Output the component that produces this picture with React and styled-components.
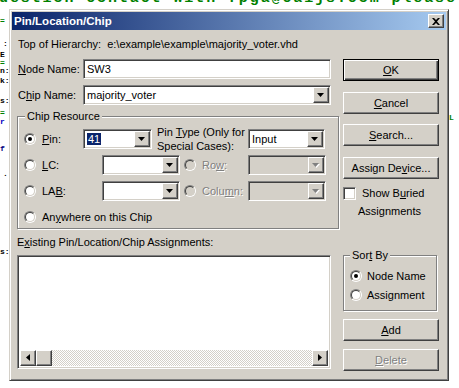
import React from 'react'
import styled, { createGlobalStyle } from 'styled-components'

const FACE = '#d4d0c8'
const SHADOW = '#808080'
const DARK = '#404040'
const UI_FONT = `"Liberation Sans", Arial, sans-serif`

const GlobalStyle = createGlobalStyle`
  html, body {
    margin: 0;
    padding: 0;
    background: #fff;
  }
  body {
    font-family: ${UI_FONT};
  }
`

const Desktop = styled.div`
  position: relative;
  width: 459px;
  height: 388px;
  overflow: hidden;
  background: #fff;
`

// editor text peeking out behind the dialog
const CodeTop = styled.div`
  position: absolute;
  left: -1px;
  top: -10px;
  font: bold 15px 'Liberation Mono', monospace;
  letter-spacing: 1.9px;
  color: #008000;
  white-space: pre;
`
const Frag = styled.div`
  position: absolute;
  left: ${(p) => p.$x || 0}px;
  top: ${(p) => p.$y}px;
  font: bold 8px 'Liberation Mono', monospace;
  line-height: 7px;
  color: ${(p) => p.$c};
  white-space: pre;
`

const Window = styled.div`
  position: absolute;
  left: 9px;
  top: 9px;
  width: 440px;
  height: 372px;
  box-sizing: border-box;
  padding: 2px;
  background: ${FACE};
  border: 1px solid;
  border-color: ${FACE} ${DARK} ${DARK} ${FACE};
  box-shadow: inset 1px 1px #fff, inset -1px -1px ${SHADOW};
  font-family: ${UI_FONT};
  font-size: 11px;
  color: #000;
`
const TitleBar = styled.div`
  display: flex;
  align-items: center;
  justify-content: space-between;
  height: 18px;
  padding: 0 2px;
  background: linear-gradient(to right, #0a246a, #a6caf0);
`
const Title = styled.span`
  font-weight: bold;
  font-size: 11.5px;
  color: #fff;
`
const CloseBtn = styled.div`
  display: flex;
  align-items: center;
  justify-content: center;
  width: 16px;
  height: 14px;
  box-sizing: border-box;
  background: ${FACE};
  border: 1px solid;
  border-color: #fff ${DARK} ${DARK} #fff;
  box-shadow: inset -1px -1px ${SHADOW};
`

const Body = styled.div`
  display: flex;
  gap: 4px;
  padding: 7px 0 0 5px;
`
const LeftCol = styled.div`
  display: flex;
  flex-direction: column;
  width: 322px;
`
const RightCol = styled.div`
  display: flex;
  flex-direction: column;
  width: 96px;
`

const Hier = styled.div`
  height: 14px;
  line-height: 14px;
  white-space: nowrap;
  padding-left: 1px;
`
const Path = styled.span`
  margin-left: 6px;
`

const Row = styled.div`
  display: flex;
  align-items: center;
  height: ${(p) => p.$h || 20}px;
  margin-top: ${(p) => p.$mt || 0}px;
`
const Label = styled.span`
  width: ${(p) => p.$w}px;
  flex: none;
  white-space: nowrap;
  padding-left: ${(p) => p.$pl || 0}px;
  box-sizing: border-box;
  color: ${(p) => (p.$disabled ? SHADOW : '#000')};
  text-shadow: ${(p) => (p.$disabled ? '1px 1px #fff' : 'none')};
`
const Acc = styled.span`
  text-decoration: underline;
  text-underline-offset: 1px;
`

const Sunken = styled.div`
  box-sizing: border-box;
  border: 1px solid;
  border-color: ${SHADOW} #fff #fff ${SHADOW};
  box-shadow: inset 1px 1px ${DARK}, inset -1px -1px ${FACE};
`
const TextField = styled(Sunken)`
  display: flex;
  align-items: center;
  width: ${(p) => p.$w}px;
  height: 20px;
  padding: 0 3px;
  background: #fff;
`
const Combo = styled(Sunken)`
  display: flex;
  align-items: center;
  flex: none;
  width: ${(p) => p.$w}px;
  height: 20px;
  padding: 1px;
  background: ${(p) => (p.$disabled ? FACE : '#fff')};
`
const ComboValue = styled.div`
  flex: 1;
  padding-left: 2px;
  white-space: nowrap;
  overflow: hidden;
`
const Selected = styled.span`
  background: #0a246a;
  color: #fff;
  padding: 1px 1px;
`
const Raised = styled.div`
  box-sizing: border-box;
  background: ${FACE};
  border: 1px solid;
  border-color: #fff ${DARK} ${DARK} #fff;
  box-shadow: inset -1px -1px ${SHADOW};
`
const DropBtn = styled(Raised)`
  display: flex;
  align-items: center;
  justify-content: center;
  flex: none;
  width: 16px;
  height: 16px;
`

const Radio = styled.span`
  flex: none;
  width: 12px;
  height: 12px;
  box-sizing: border-box;
  margin-left: ${(p) => p.$ml || 0}px;
  margin-right: ${(p) => p.$mr || 6}px;
  border-radius: 50%;
  border: 1px solid;
  border-color: ${SHADOW} #fff #fff ${SHADOW};
`
const RadioInner = styled.span`
  display: flex;
  align-items: center;
  justify-content: center;
  width: 100%;
  height: 100%;
  box-sizing: border-box;
  border-radius: 50%;
  border: 1px solid;
  border-color: ${DARK} ${FACE} ${FACE} ${DARK};
  background: ${(p) => (p.$disabled ? FACE : '#fff')};
`
const Dot = styled.span`
  width: 4px;
  height: 4px;
  border-radius: 50%;
  background: #000;
`

const Group = styled.div`
  position: relative;
  box-sizing: border-box;
  height: ${(p) => p.$h}px;
  width: ${(p) => p.$w}px;
  margin-top: ${(p) => p.$mt}px;
  padding: 12px 0 0 6px;
  border: 1px solid ${SHADOW};
  box-shadow: inset 1px 1px #fff, 1px 1px #fff;
`
const Legend = styled.span`
  position: absolute;
  left: ${(p) => p.$left}px;
  top: -8px;
  padding: 0 2px;
  line-height: 14px;
  background: ${FACE};
`
const PinType = styled.div`
  width: 91px;
  margin-left: 5px;
  line-height: 14px;
  white-space: nowrap;
`

const SmallLabel = styled.div`
  height: 14px;
  line-height: 14px;
  margin-top: 6px;
`
const ListBox = styled(Sunken)`
  display: flex;
  flex-direction: column;
  width: 314px;
  height: 114px;
  margin-top: 6px;
  padding: 2px;
  background: #fff;
`
const ListArea = styled.div`
  flex: 1;
`
const ScrollBar = styled.div`
  display: flex;
  height: 16px;
`
const ScrollBtn = styled(Raised)`
  display: flex;
  align-items: center;
  justify-content: center;
  width: 16px;
  height: 16px;
`
const Track = styled.div`
  flex: 1;
  background: repeating-conic-gradient(#fff 0 25%, ${FACE} 0 50%) 0 0 / 2px 2px;
`

const Button = styled.div`
  display: flex;
  align-items: center;
  justify-content: center;
  box-sizing: border-box;
  width: 96px;
  height: 22px;
  margin-top: ${(p) => p.$mt}px;
  background: ${FACE};
  border: 1px solid;
  border-color: ${(p) => (p.$default ? '#000' : `#fff ${DARK} ${DARK} #fff`)};
  box-shadow: ${(p) =>
    p.$default
      ? `inset 1px 1px #fff, inset -1px -1px ${DARK}, inset -2px -2px ${SHADOW}`
      : `inset -1px -1px ${SHADOW}`};
  color: ${(p) => (p.$disabled ? SHADOW : '#000')};
  text-shadow: ${(p) => (p.$disabled ? '1px 1px #fff' : 'none')};
`

const CheckRow = styled.div`
  display: flex;
  align-items: flex-start;
  margin-top: 5px;
`
const CheckBox = styled(Sunken)`
  flex: none;
  width: 13px;
  height: 13px;
  margin-top: 3px;
  background: #fff;
`
const CheckText = styled.div`
  line-height: 18px;
  white-space: nowrap;
`
const CheckLine = styled.div`
  padding-left: ${(p) => p.$pl}px;
`

const Arrow = ({ dir = 'down', color = '#000' }) => {
  const pts = {
    down: '0,0 7,0 3.5,4',
    left: '4,0 4,7 0,3.5',
    right: '0,0 0,7 4,3.5',
  }[dir]
  const w = dir === 'down' ? 8 : 5
  const h = dir === 'down' ? 5 : 8
  return (
    <svg width={w} height={h} viewBox={`0 0 ${w} ${h}`}>
      {color !== '#000' && (
        <polygon points={pts} fill='#fff' transform='translate(1,1)' />
      )}
      <polygon points={pts} fill={color} />
    </svg>
  )
}

function RadioButton({ checked, disabled, ml, mr }) {
  return (
    <Radio $ml={ml} $mr={mr}>
      <RadioInner $disabled={disabled}>{checked && <Dot />}</RadioInner>
    </Radio>
  )
}

function DropDown({ w, disabled, children }) {
  return (
    <Combo $w={w} $disabled={disabled}>
      <ComboValue>{children}</ComboValue>
      <DropBtn>
        <Arrow color={disabled ? SHADOW : '#000'} />
      </DropBtn>
    </Combo>
  )
}

const fragments = [
  { y: 17, c: '#008000', t: '=' },
  { y: 40, x: 3, c: '#000', t: ':' },
  { y: 51, c: '#000', t: 'E' },
  { y: 59, c: '#008000', t: '=' },
  { y: 67, c: '#000', t: 'n:' },
  { y: 77, c: '#000', t: 'k:' },
  { y: 97, c: '#000', t: 's:' },
  { y: 109, c: '#008000', t: '=' },
  { y: 118, c: '#0000c0', t: 'r' },
  { y: 145, c: '#000080', t: 'f' },
  { y: 170, x: 3, c: '#000', t: '.' },
  { y: 248, c: '#000', t: 's:' },
]

export default function App() {
  return (
    <Desktop>
      <GlobalStyle />
      <CodeTop>uestion contact with fpga@caijs.com please</CodeTop>
      {fragments.map((f) => (
        <Frag key={f.y} $y={f.y} $x={f.x} $c={f.c}>
          {f.t}
        </Frag>
      ))}
      <Frag $x={449} $y={114} $c='#008000'>
        L
      </Frag>

      <Window>
        <TitleBar>
          <Title>Pin/Location/Chip</Title>
          <CloseBtn>
            <svg width='8' height='7' viewBox='0 0 8 7'>
              <path
                d='M0 0h2l2 2 2-2h2L5 3.5 8 7H6L4 5 2 7H0l3-3.5z'
                fill='#000'
              />
            </svg>
          </CloseBtn>
        </TitleBar>

        <Body>
          <LeftCol>
            <Hier>
              Top of Hierarchy:<Path>e:\example\example\majority_voter.vhd</Path>
            </Hier>

            <Row $mt={8}>
              <Label $w={66} $pl={1}>
                <Acc>N</Acc>ode Name:
              </Label>
              <TextField $w={248}>SW3</TextField>
            </Row>
            <Row $mt={6}>
              <Label $w={66} $pl={1}>
                C<Acc>h</Acc>ip Name:
              </Label>
              <DropDown w={248}>majority_voter</DropDown>
            </Row>

            <Group $w={322} $h={113} $mt={11}>
              <Legend $left={7}>Chip Resource</Legend>
              <Row>
                <RadioButton checked />
                <Label $w={41}>
                  <Acc>P</Acc>in:
                </Label>
                <DropDown w={69}>
                  <Selected>41</Selected>
                </DropDown>
                <PinType>
                  Pin <Acc>T</Acc>ype (Only for
                  <br />
                  Special Cases):
                </PinType>
                <DropDown w={77}>Input</DropDown>
              </Row>
              <Row $mt={6}>
                <RadioButton />
                <Label $w={60}>
                  <Acc>L</Acc>C:
                </Label>
                <DropDown w={78} />
                <RadioButton disabled ml={4} />
                <Label $w={46} $disabled>
                  Ro<Acc>w</Acc>:
                </Label>
                <DropDown w={78} disabled />
              </Row>
              <Row $mt={6}>
                <RadioButton />
                <Label $w={60}>
                  LA<Acc>B</Acc>:
                </Label>
                <DropDown w={78} />
                <RadioButton disabled ml={4} />
                <Label $w={46} $disabled>
                  Colu<Acc>m</Acc>n:
                </Label>
                <DropDown w={78} disabled />
              </Row>
              <Row $mt={6}>
                <RadioButton />
                <span>
                  An<Acc>y</Acc>where on this Chip
                </span>
              </Row>
            </Group>

            <SmallLabel>
              E<Acc>x</Acc>isting Pin/Location/Chip Assignments:
            </SmallLabel>
            <ListBox>
              <ListArea />
              <ScrollBar>
                <ScrollBtn>
                  <Arrow dir='left' />
                </ScrollBtn>
                <ScrollBtn />
                <Track />
                <ScrollBtn>
                  <Arrow dir='right' />
                </ScrollBtn>
              </ScrollBar>
            </ListBox>
          </LeftCol>

          <RightCol>
            <Button $mt={22} $default>
              <Acc>O</Acc>K
            </Button>
            <Button $mt={11}>
              <Acc>C</Acc>ancel
            </Button>
            <Button $mt={10}>
              <Acc>S</Acc>earch...
            </Button>
            <Button $mt={11}>
              Assign De<Acc>v</Acc>ice...
            </Button>
            <CheckRow>
              <CheckBox />
              <CheckText>
                <CheckLine $pl={6}>
                  Show B<Acc>u</Acc>ried
                </CheckLine>
                <CheckLine $pl={2}>Assignments</CheckLine>
              </CheckText>
            </CheckRow>

            <Group $w={94} $h={56} $mt={35}>
              <Legend $left={6}>
                Sor<Acc>t</Acc> By
              </Legend>
              <Row $h={16}>
                <RadioButton checked mr={5} />
                <span>Node Name</span>
              </Row>
              <Row $h={16} $mt={3}>
                <RadioButton mr={5} />
                <span>Assignment</span>
              </Row>
            </Group>

            <Button $mt={8}>
              <Acc>A</Acc>dd
            </Button>
            <Button $mt={8} $disabled>
              <Acc>D</Acc>elete
            </Button>
          </RightCol>
        </Body>
      </Window>
    </Desktop>
  )
}
